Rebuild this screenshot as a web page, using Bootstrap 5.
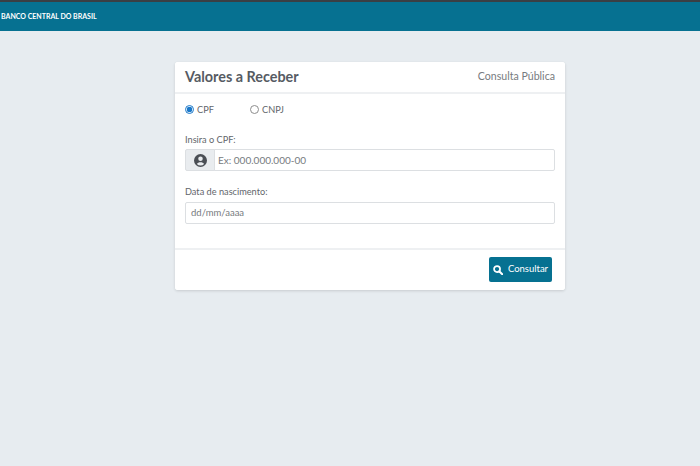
<!DOCTYPE html>
<html lang="pt-BR">
<head>
<meta charset="utf-8">
<title>Valores a Receber</title>
<link href="https://cdn.jsdelivr.net/npm/bootstrap@5.3.0/dist/css/bootstrap.min.css" rel="stylesheet">
<style>
html,body{height:100%}
body{background:#e7ecf0;font-family:Lato,"Noto Sans",sans-serif;color:#5f6368;font-size:10px;overflow:hidden}
.topbar{background:#067191;border-top:2px solid #3a3f44;height:31px;padding-left:1px;color:#fff;font-size:7px;font-weight:700}
.panel{width:390px;margin:31px 0 0 175px;border:0;border-radius:3px;box-shadow:0 1px 3px rgba(0,0,0,.14);color:#62666b}
.panel .card-header{height:32px;background:#fff;border-bottom:2px solid #eef0f2;padding:0 10px;border-radius:3px 3px 0 0}
.panel-title{font-size:14.4px;font-weight:700;color:#565b63;margin:0}
.panel-sub{font-size:10.6px;color:#777b80}
.panel .card-body{padding:0 10px;height:154px}
.radios{height:32px;gap:25px;margin-bottom:7px}
.radio-item{display:flex;align-items:center;gap:3px;margin:0;padding:0;min-height:0;font-size:9.2px;width:40px}
.radio-item .form-check-input{float:none;margin:0;width:9px;height:9px;border-color:#8d8d8d;flex:none}
.radio-item .form-check-input:checked{border-color:#1b78c9;background:radial-gradient(circle,#1b78c9 0 2.600px,#fff 3.100px)}
.field-label{font-size:9.2px;margin:0 0 3px;line-height:13px;display:block}
.field-in{height:22px;font-size:10px;padding:0 5px;border-color:#dcdfe2;border-radius:2px;color:#62666b}
.field-in::placeholder{color:#777b80;opacity:1}
.date-in{font-size:9.5px;padding-bottom:1px}
.cpf-field{margin-bottom:14px}
.date-label{margin-bottom:4px}
.addon{width:30px;background:#e9ecef;border-color:#dcdfe2;padding:0;justify-content:center;border-radius:2px 0 0 2px}
.cpf-field .field-in{padding-left:3px}
.panel .card-footer{height:42px;background:#fff;border-top:2px solid #eef0f2;padding:7px 13px 0 0;border-radius:0 0 3px 3px}
.go-btn{width:63px;height:25px;background:#067191;border:0;border-radius:2px;color:#fff;font-size:9.500px;padding:0;gap:5px}
.go-btn:hover{background:#067191;color:#fff}
</style>
</head>
<body>
<div class="topbar d-flex align-items-center">BANCO CENTRAL DO BRASIL</div>
<div class="card panel">
  <div class="card-header d-flex align-items-center justify-content-between">
    <h1 class="panel-title">Valores a Receber</h1>
    <span class="panel-sub">Consulta Pública</span>
  </div>
  <div class="card-body">
    <div class="radios d-flex align-items-center">
      <label class="form-check radio-item"><input class="form-check-input" type="radio" name="tipo" checked>CPF</label>
      <label class="form-check radio-item"><input class="form-check-input" type="radio" name="tipo">CNPJ</label>
    </div>
    <div class="cpf-field">
      <label class="field-label" for="cpf">Insira o CPF:</label>
      <div class="input-group">
        <span class="input-group-text addon">
          <svg width="13" height="13" viewBox="0 0 16 16" aria-hidden="true"><path fill="#4b4f55" fill-rule="evenodd" d="M8 0a8 8 0 1 1 0 16A8 8 0 0 1 8 0Zm0 3a2.800 2.800 0 1 0 0 5.600A2.800 2.800 0 0 0 8 3Zm0 7.200c-2 0-3.700.8-4.400 2a6 6 0 0 0 8.800 0c-.7-1.200-2.400-2-4.400-2Z"/></svg>
        </span>
        <input id="cpf" class="form-control field-in" type="text" placeholder="Ex: 000.000.000-00">
      </div>
    </div>
    <div>
      <label class="field-label date-label" for="nasc">Data de nascimento:</label>
      <input id="nasc" class="form-control field-in date-in" type="text" placeholder="dd/mm/aaaa">
    </div>
  </div>
  <div class="card-footer d-flex justify-content-end align-items-start">
    <button class="btn go-btn d-inline-flex align-items-center justify-content-center" type="button">
      <svg width="10" height="10" viewBox="0 0 16 16" aria-hidden="true"><circle cx="6.500" cy="6.500" r="4.800" fill="none" stroke="#fff" stroke-width="2.800"/><path d="M10.300 10.300 14.800 14.800" stroke="#fff" stroke-width="3.200" stroke-linecap="round"/></svg>
      Consultar
    </button>
  </div>
</div>
</body>
</html>
